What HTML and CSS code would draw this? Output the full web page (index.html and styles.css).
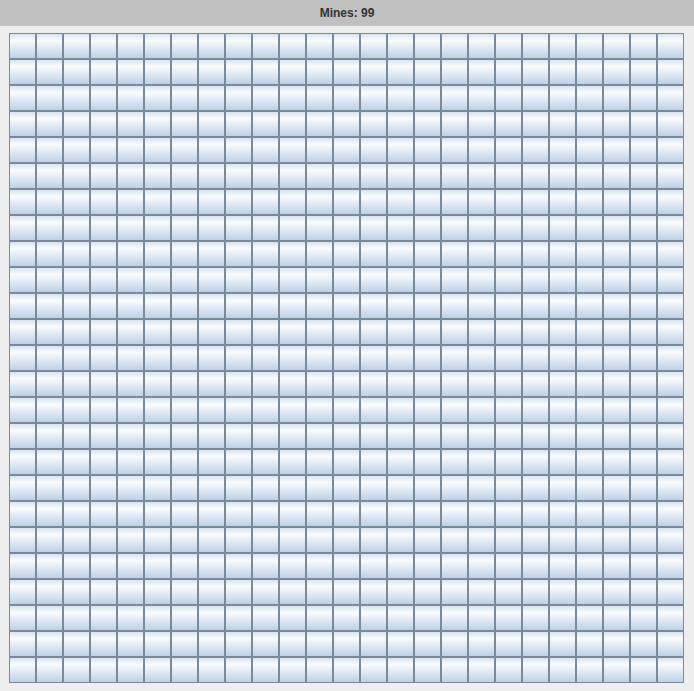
FILE: index.html
```html
<!DOCTYPE html>
<html>
<head>
<meta charset="utf-8">
<link rel="stylesheet" href="styles.css">
</head>
<body>
<div class="header">Mines: 99</div>
<div class="board"><div class="grid" id="grid"></div></div>
<script>
var g=document.getElementById('grid');
for(var i=0;i<625;i++){var c=document.createElement('div');c.className='cell';g.appendChild(c);}
</script>
</body>
</html>
```
FILE: styles.css
```css
html,body{margin:0;padding:0;}
body{background:#eeeeee;width:694px;height:691px;overflow:hidden;font-family:"Liberation Sans",Arial,sans-serif;}
.header{height:26px;background:#c0c0c0;color:#333333;font-weight:bold;font-size:12px;display:flex;align-items:center;justify-content:center;}
.board{padding:7px 10px 0 9px;}
.grid{display:grid;grid-template-columns:repeat(25,27px);grid-template-rows:repeat(25,26px);}
.cell{box-sizing:border-box;border:1px solid #7a8a99;background:linear-gradient(to bottom,#d9e4f0 0%,#fafcfe 28%,#e2ebf5 55%,#bed1e6 100%);}
```
